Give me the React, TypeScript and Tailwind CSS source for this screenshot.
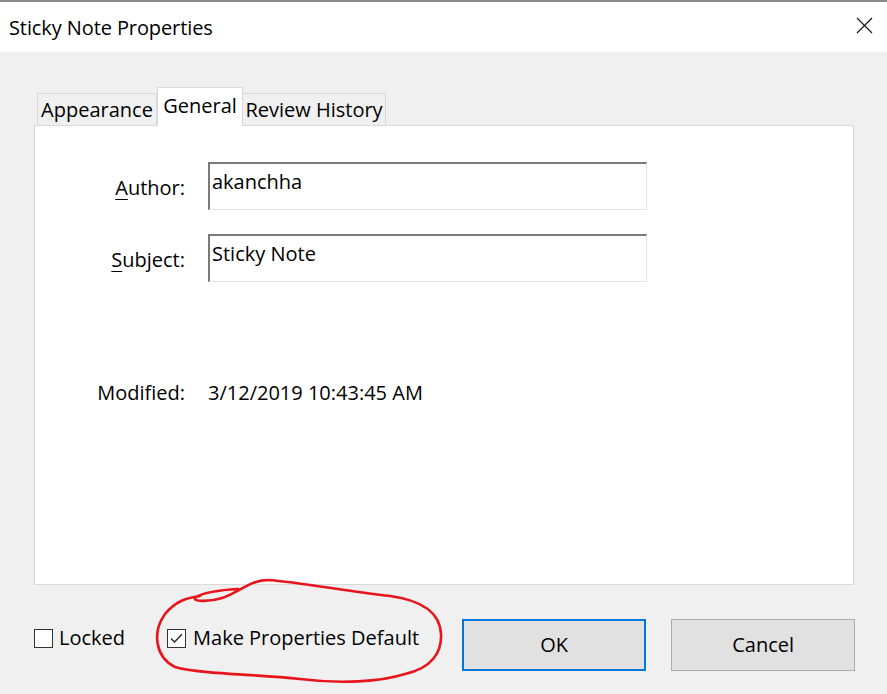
import React from 'react';

const FONT = { fontFamily: '"Open Sans", "Noto Sans", "Liberation Sans", sans-serif' };

function Checkbox({ checked }: { checked?: boolean }) {
  return (
    <span className="w-[19px] h-[19px] border border-[#333333] bg-white flex items-center justify-center shrink-0">
      {checked && (
        <svg width="13" height="11" viewBox="0 0 13 11" fill="none">
          <path d="M1 5.5 L4.5 9 L12 1.2" stroke="#222" strokeWidth="1.3" />
        </svg>
      )}
    </span>
  );
}

export default function App() {
  return (
    <div
      className="relative w-[887px] h-[694px] overflow-hidden bg-[#f0f0f0] border-t-2 border-[#8a8a8a] text-black text-[20px]"
      style={FONT}
    >
      {/* Title bar */}
      <div className="h-[50px] bg-white flex items-center justify-between pl-[9px] pr-[14px]">
        <span className="text-[20px] tracking-[-0.1px] mt-[2px]">Sticky Note Properties</span>
        <svg width="17" height="17" viewBox="0 0 17 17" className="mt-[-4px]">
          <path d="M1 1 L16 16 M16 1 L1 16" stroke="#111" strokeWidth="1.1" />
        </svg>
      </div>

      {/* Body */}
      <div className="pl-[34px] pt-[35px]">
        {/* Tabs */}
        <div className="flex items-end pl-[3px] relative z-10">
          <div className="w-[120px] h-[32px] bg-[#f0f0f0] border border-b-0 border-[#d9d9d9] flex items-center justify-center">
            Appearance
          </div>
          <div className="w-[86px] h-[39px] bg-white border border-b-0 border-[#d9d9d9] -mb-px flex items-start justify-center pt-[3px]">
            General
          </div>
          <div className="w-[143px] h-[32px] bg-[#f0f0f0] border border-b-0 border-l-0 border-[#d9d9d9] flex items-center justify-center">
            Review History
          </div>
        </div>

        {/* Panel */}
        <div className="w-[820px] h-[460px] bg-white border border-[#d9d9d9] pt-[36px]">
          <div className="flex items-start">
            <div className="w-[150px] text-right pt-[11px]">
              <span className="underline underline-offset-[4px] decoration-1">A</span>uthor:
            </div>
            <div className="ml-[23px] w-[439px] h-[48px] border-t-2 border-l-2 border-[#7a7a7a] border-r border-b border-r-[#e3e3e3] border-b-[#e3e3e3] pl-[2px] pt-[5px] leading-[26px]">
              akanchha
            </div>
          </div>
          <div className="flex items-start mt-[24px]">
            <div className="w-[150px] text-right pt-[11px]">
              <span className="underline underline-offset-[4px] decoration-1">S</span>ubject:
            </div>
            <div className="ml-[23px] w-[439px] h-[48px] border-t-2 border-l-2 border-[#7a7a7a] border-r border-b border-r-[#e3e3e3] border-b-[#e3e3e3] pl-[2px] pt-[5px] leading-[26px]">
              Sticky Note
            </div>
          </div>
          <div className="flex items-center mt-[96px]">
            <div className="w-[150px] text-right">Modified:</div>
            <div className="ml-[23px]">3/12/2019 10:43:45 AM</div>
          </div>
        </div>

        {/* Bottom row */}
        <div className="flex items-center mt-[34px] h-[52px]">
          <div className="flex items-center gap-[6px] mt-[-14px]">
            <Checkbox />
            <span>Locked</span>
          </div>
          <div className="flex items-center gap-[7px] ml-[42px] mt-[-14px]">
            <Checkbox checked />
            <span>Make Properties Default</span>
          </div>
          <button className="ml-[43px] w-[184px] h-[52px] bg-[#e1e1e1] border-2 border-[#0078d7]">
            OK
          </button>
          <button className="ml-[25px] w-[184px] h-[52px] bg-[#e1e1e1] border border-[#adadad]">
            Cancel
          </button>
        </div>
      </div>

      {/* Red annotation */}
      <svg className="absolute left-0 top-0 pointer-events-none" width="887" height="694" viewBox="0 0 887 694" fill="none">
        <path
          d="M238 587 C 220 588, 205 590, 196 595 C 190 600, 210 600, 222 596 C 240 590, 250 578, 268 578 C 300 580, 350 590, 390 594 C 420 598, 440 610, 441 632 C 442 650, 432 666, 405 672 C 380 680, 340 682, 300 677 C 250 672, 200 672, 175 665 C 155 655, 152 630, 165 612 C 175 600, 185 596, 200 594"
          stroke="#e8141c"
          strokeWidth="2.6"
          strokeLinecap="round"
          strokeLinejoin="round"
        />
      </svg>
    </div>
  );
}
